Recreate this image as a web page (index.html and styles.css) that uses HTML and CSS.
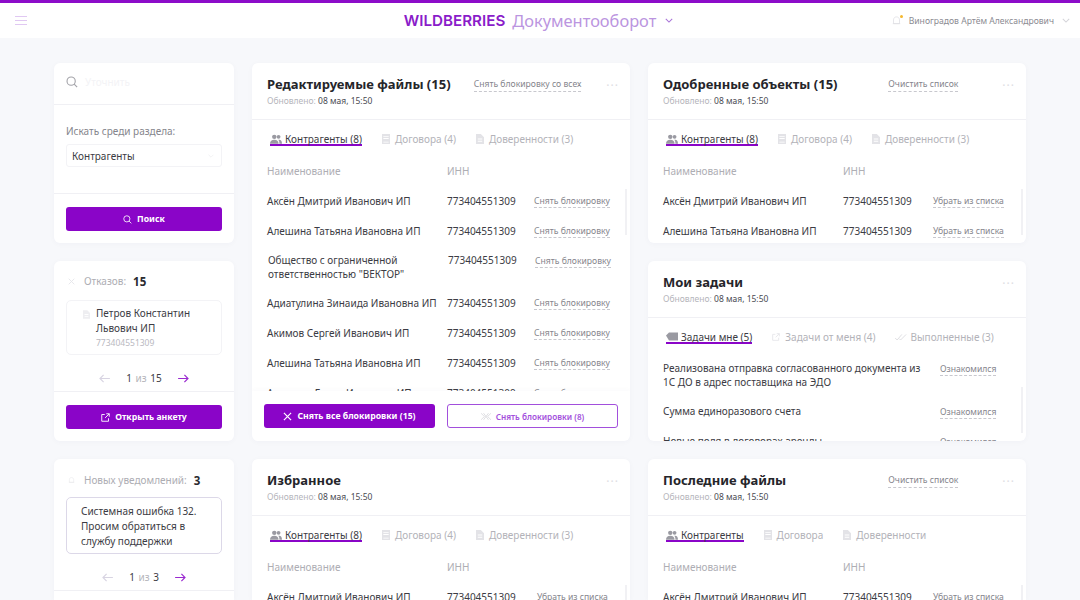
FILE: index.html
```html
<!DOCTYPE html>
<html lang="ru">

<head>
    <meta charset="UTF-8">
    <title>Wildberries Документооборот</title>
    <link rel="stylesheet" href="styles.css">
</head>

<body>
    <svg class="sprite" width="0" height="0">
        <symbol id="i-users" viewBox="0 0 14 11"><circle cx="5" cy="3" r="2.6"/><path d="M0 11c0-3 2-4.500 5-4.500s5 1.500 5 4.500z"/><circle cx="10" cy="3" r="2.200"/><path d="M10.800 6.300c2 .2 3.200 1.700 3.200 4.700h-3c0-2-.4-3.500-1.400-4.500z"/></symbol>
        <symbol id="i-book" viewBox="0 0 9 11"><path d="M0 0h9v11H0zM1.500 2v1h6V2zm0 2.500v1h6v-1zm0 5h6v-1h-6z" fill-rule="evenodd"/></symbol>
        <symbol id="i-file" viewBox="0 0 9 11"><path d="M0 0h5.500L9 3.500V11H0zM2 5v1h5V5zm0 2.500v1h5v-1z" fill-rule="evenodd"/></symbol>
        <symbol id="i-search" viewBox="0 0 14 14"><circle cx="6" cy="6" r="4.800" fill="none" stroke="currentColor" stroke-width="1.300"/><path d="M9.500 9.500 13 13" fill="none" stroke="currentColor" stroke-width="1.300"/></symbol>
        <symbol id="i-open" viewBox="0 0 12 12"><path d="M5 2H1v9h9V7M7 1h4v4M11 1 5.500 6.500" fill="none" stroke="currentColor" stroke-width="1.200"/></symbol>
        <symbol id="i-left" viewBox="0 0 12 10"><path d="M12 5H1M5 1 1 5l4 4" fill="none" stroke="currentColor" stroke-width="1.300"/></symbol>
        <symbol id="i-right" viewBox="0 0 12 10"><path d="M0 5h11M7 1l4 4-4 4" fill="none" stroke="currentColor" stroke-width="1.300"/></symbol>
        <symbol id="i-down" viewBox="0 0 10 6"><path d="M1 1l4 4 4-4" fill="none" stroke="currentColor" stroke-width="1.300"/></symbol>
        <symbol id="i-x" viewBox="0 0 10 10"><path d="M1 1l8 8M9 1 1 9" fill="none" stroke="currentColor" stroke-width="1.300"/></symbol>
        <symbol id="i-xx" viewBox="0 0 12 8"><path d="M0 0l4 4-4 4M3 0l3 4-3 4M12 0 8 4l4 4M9 0 6 4l3 4" fill="none" stroke="currentColor" stroke-width=".9"/></symbol>
        <symbol id="i-task" viewBox="0 0 12 9"><path d="M0 3l3-3h9v8H3z"/></symbol>
        <symbol id="i-check" viewBox="0 0 14 8"><path d="M0 5l2.500 2.500L8 1M5 6l1.500 1.500L13 1" fill="none" stroke="currentColor" stroke-width="1"/></symbol>
        <symbol id="i-bell" viewBox="0 0 12 13"><path d="M2 10V5c0-2.200 1.600-4 4-4s4 1.800 4 4v5zM1 10h10" fill="none" stroke="currentColor" stroke-width="1"/></symbol>
    </svg>

    <div class="topbar">
        <div class="burger"><span></span><span></span><span></span></div>
        <div class="brand">
            <span class="brand-logo">WILDBERRIES</span>
            <span class="brand-name">Документооборот</span>
            <svg class="brand-arrow"><use href="#i-down"/></svg>
        </div>
        <div class="user">
            <span class="bell"><svg><use href="#i-bell"/></svg><i></i></span>
            <span class="user-name">Виноградов Артём Александрович</span>
            <svg class="user-arrow"><use href="#i-down"/></svg>
        </div>
    </div>

    <div class="dashboard">
        <!-- левая колонка -->
        <div class="card area-search">
            <div class="search-row">
                <svg class="search-icon"><use href="#i-search"/></svg>
                <span class="search-hint">Уточнить</span>
            </div>
            <div class="search-section">
                <label>Искать среди раздела:</label>
                <div class="select">Контрагенты<svg><use href="#i-down"/></svg></div>
            </div>
            <div class="side-foot">
                <button class="btn"><svg class="btn-icon"><use href="#i-search"/></svg>Поиск</button>
            </div>
        </div>

        <div class="card side-card area-reject">
            <div class="stat"><svg class="stat-icon"><use href="#i-x"/></svg><span>Отказов:</span><b>15</b></div>
            <div class="box">
                <svg class="box-icon"><use href="#i-file"/></svg>
                <div>
                    <div class="box-name">Петров Константин Львович ИП</div>
                    <div class="box-inn">773404551309</div>
                </div>
            </div>
            <div class="pager">
                <svg class="arrow-off"><use href="#i-left"/></svg>
                <span class="pager-text">1 <em>из</em> 15</span>
                <svg class="arrow-on"><use href="#i-right"/></svg>
            </div>
            <div class="side-foot">
                <button class="btn"><svg class="btn-icon"><use href="#i-open"/></svg>Открыть анкету</button>
            </div>
        </div>

        <div class="card side-card area-notice card-cut">
            <div class="stat stat-notice"><svg class="stat-icon"><use href="#i-bell"/></svg><span>Новых уведомлений:</span><b>3</b></div>
            <div class="box box-notice">Системная ошибка 132. Просим обратиться в службу поддержки</div>
            <div class="pager">
                <svg class="arrow-off"><use href="#i-left"/></svg>
                <span class="pager-text">1 <em>из</em> 3</span>
                <svg class="arrow-on"><use href="#i-right"/></svg>
            </div>
        </div>

        <!-- редактируемые файлы -->
        <div class="card panel area-edited">
            <div class="panel-head">
                <div>
                    <h2>Редактируемые файлы (15)</h2>
                    <p>Обновлено: <span>08 мая, 15:50</span></p>
                </div>
                <a class="head-link head-link-wide">Снять блокировку со всех</a>
                <div class="dots">···</div>
            </div>
            <div class="tabs">
                <a class="tab active"><svg class="ic-users"><use href="#i-users"/></svg>Контрагенты (8)</a>
                <a class="tab"><svg class="ic-doc"><use href="#i-book"/></svg>Договора (4)</a>
                <a class="tab"><svg class="ic-doc"><use href="#i-file"/></svg>Доверенности (3)</a>
            </div>
            <div class="list">
                <div class="row row-head"><span>Наименование</span><span>ИНН</span></div>
                <div class="row"><span>Аксён Дмитрий Иванович ИП</span><span>773404551309</span><a>Снять блокировку</a></div>
                <div class="row"><span>Алешина Татьяна Ивановна ИП</span><span>773404551309</span><a>Снять блокировку</a></div>
                <div class="row row-double"><span>Общество с ограниченной ответственностью "ВЕКТОР"</span><span>773404551309</span><a>Снять блокировку</a></div>
                <div class="row"><span>Адиатулина Зинаида Ивановна ИП</span><span>773404551309</span><a>Снять блокировку</a></div>
                <div class="row"><span>Акимов Сергей Иванович ИП</span><span>773404551309</span><a>Снять блокировку</a></div>
                <div class="row"><span>Алешина Татьяна Ивановна ИП</span><span>773404551309</span><a>Снять блокировку</a></div>
                <div class="row"><span>Аксенова Елена Ивановна ИП</span><span>773404551309</span><a>Снять блокировку</a></div>
                <div class="scroll"></div>
            </div>
            <div class="panel-foot">
                <button class="btn"><svg class="btn-icon"><use href="#i-x"/></svg>Снять все блокировки (15)</button>
                <button class="btn btn-outline"><svg class="btn-icon"><use href="#i-xx"/></svg>Снять блокировки (8)</button>
            </div>
        </div>

        <!-- одобренные объекты -->
        <div class="card panel area-approved">
            <div class="panel-head">
                <div>
                    <h2>Одобренные объекты (15)</h2>
                    <p>Обновлено: <span>08 мая, 15:50</span></p>
                </div>
                <a class="head-link">Очистить список</a>
                <div class="dots">···</div>
            </div>
            <div class="tabs">
                <a class="tab active"><svg class="ic-users"><use href="#i-users"/></svg>Контрагенты (8)</a>
                <a class="tab"><svg class="ic-doc"><use href="#i-book"/></svg>Договора (4)</a>
                <a class="tab"><svg class="ic-doc"><use href="#i-file"/></svg>Доверенности (3)</a>
            </div>
            <div class="list list-remove">
                <div class="row row-head"><span>Наименование</span><span>ИНН</span></div>
                <div class="row"><span>Аксён Дмитрий Иванович ИП</span><span>773404551309</span><a>Убрать из списка</a></div>
                <div class="row"><span>Алешина Татьяна Ивановна ИП</span><span>773404551309</span><a>Убрать из списка</a></div>
                <div class="scroll"></div>
            </div>
        </div>

        <!-- мои задачи -->
        <div class="card panel area-tasks">
            <div class="panel-head">
                <div>
                    <h2>Мои задачи</h2>
                    <p>Обновлено: <span>08 мая, 15:50</span></p>
                </div>
                <div class="dots">···</div>
            </div>
            <div class="tabs">
                <a class="tab active"><svg class="ic-users"><use href="#i-task"/></svg>Задачи мне (5)</a>
                <a class="tab"><svg class="ic-doc"><use href="#i-open"/></svg>Задачи от меня (4)</a>
                <a class="tab"><svg class="ic-users"><use href="#i-check"/></svg>Выполненные (3)</a>
            </div>
            <div class="list list-tasks">
                <div class="task"><span>Реализована отправка согласованного документа из 1С ДО в адрес поставщика на ЭДО</span><a>Ознакомился</a></div>
                <div class="task"><span>Сумма единоразового счета</span><a>Ознакомился</a></div>
                <div class="task"><span>Новые поля в договорах аренды</span><a>Ознакомился</a></div>
                <div class="scroll"></div>
            </div>
        </div>

        <!-- избранное -->
        <div class="card panel area-fav card-cut">
            <div class="panel-head">
                <div>
                    <h2>Избранное</h2>
                    <p>Обновлено: <span>08 мая, 15:50</span></p>
                </div>
                <div class="dots">···</div>
            </div>
            <div class="tabs">
                <a class="tab active"><svg class="ic-users"><use href="#i-users"/></svg>Контрагенты (8)</a>
                <a class="tab"><svg class="ic-doc"><use href="#i-book"/></svg>Договора (4)</a>
                <a class="tab"><svg class="ic-doc"><use href="#i-file"/></svg>Доверенности (3)</a>
            </div>
            <div class="list list-remove">
                <div class="row row-head"><span>Наименование</span><span>ИНН</span></div>
                <div class="row"><span>Аксён Дмитрий Иванович ИП</span><span>773404551309</span><a>Убрать из списка</a></div>
                <div class="scroll"></div>
            </div>
        </div>

        <!-- последние файлы -->
        <div class="card panel area-recent card-cut">
            <div class="panel-head">
                <div>
                    <h2>Последние файлы</h2>
                    <p>Обновлено: <span>08 мая, 15:50</span></p>
                </div>
                <a class="head-link">Очистить список</a>
                <div class="dots">···</div>
            </div>
            <div class="tabs">
                <a class="tab active"><svg class="ic-users"><use href="#i-users"/></svg>Контрагенты</a>
                <a class="tab"><svg class="ic-doc"><use href="#i-book"/></svg>Договора</a>
                <a class="tab"><svg class="ic-doc"><use href="#i-file"/></svg>Доверенности</a>
            </div>
            <div class="list list-remove">
                <div class="row row-head"><span>Наименование</span><span>ИНН</span></div>
                <div class="row"><span>Аксён Дмитрий Иванович ИП</span><span>773404551309</span><a>Убрать из списка</a></div>
                <div class="scroll"></div>
            </div>
        </div>
    </div>
</body>

</html>
```

FILE: styles.css
```css
:root {
    --purple: #8a05c8;
    --page: #f7f8fb;
    --line: #f0f0f4;
    --text: #3c3c44;
    --muted: #a9a9b0;
}

* {
    margin: 0;
    padding: 0;
    box-sizing: border-box;
}

html,
body {
    height: 600px;
    overflow: hidden;
}

body {
    font-family: "Noto Sans", "Open Sans", sans-serif;
    font-size: 10px;
    background-color: var(--page);
    color: var(--text);
}

svg {
    fill: currentColor;
    flex: none;
}

.sprite {
    position: absolute;
}

/* шапка */
.topbar {
    height: 38px;
    border-top: 3px solid #8c0cc9;
    background: #fff;
    display: grid;
    grid-template-columns: 1fr auto 1fr;
    align-items: center;
    padding: 0 10px 0 15px;
}

.burger {
    width: 12px;
    display: flex;
    flex-direction: column;
    gap: 3px;
}

.burger span {
    height: 1px;
    background: #e0c8f2;
}

.brand {
    display: flex;
    align-items: center;
    margin-right: 8px;
}

.brand-logo {
    font-family: Inter, sans-serif;
    font-size: 15.2px;
    font-weight: 600;
    color: #8a1cc9;
}

.brand-name {
    font-size: 16.4px;
    margin-left: 7px;
    color: #bb95e0;
}

.brand-arrow {
    width: 8px;
    height: 5px;
    margin-left: 9px;
    color: #a873d8;
}

.user {
    display: flex;
    align-items: center;
    justify-content: flex-end;
}

.bell {
    position: relative;
    width: 9px;
    height: 10px;
    color: #dedee3;
}

.bell svg {
    width: 9px;
    height: 10px;
    display: block;
}

.bell i {
    position: absolute;
    top: -1px;
    right: -2px;
    width: 3px;
    height: 3px;
    border-radius: 50%;
    background: #f5b82e;
}

.user-name {
    margin-left: 8px;
    font-size: 8.6px;
    color: #8b8b92;
}

.user-arrow {
    width: 8px;
    height: 5px;
    margin-left: 8px;
    color: #d4d4d9;
}

/* сетка */
.dashboard {
    display: grid;
    grid-template-columns: 180px 378px 378px;
    grid-template-rows: 180px 180px 141px;
    grid-template-areas:
        "search edited approved"
        "reject edited tasks"
        "notice fav recent";
    gap: 18px;
    padding: 25px 0 0 54px;
}

.area-search { grid-area: search; }
.area-reject { grid-area: reject; }
.area-notice { grid-area: notice; }
.area-edited { grid-area: edited; }
.area-approved { grid-area: approved; }
.area-tasks { grid-area: tasks; }
.area-fav { grid-area: fav; }
.area-recent { grid-area: recent; }

.card {
    background: #fff;
    border-radius: 6px;
    box-shadow: 0 1px 6px rgba(40, 40, 90, 0.03);
    overflow: hidden;
}

.card-cut {
    border-radius: 6px 6px 0 0;
}

.side-card {
    padding-top: 12px;
}

.panel {
    display: flex;
    flex-direction: column;
}

/* поиск */
.search-row {
    height: 42px;
    padding: 0 0 4px 12px;
    border-bottom: 1px solid var(--line);
    display: flex;
    align-items: center;
}

.search-icon {
    width: 12px;
    height: 12px;
    color: #a3a3a9;
}

.search-hint {
    margin-left: 7px;
    color: #f3f3f6;
}

.search-section {
    height: 89px;
    padding: 19px 12px 0;
    border-bottom: 1px solid var(--line);
}

.search-section label {
    display: block;
    color: #85858c;
    margin-bottom: 6px;
}

.select {
    height: 23px;
    padding: 0 7px 0 5px;
    border: 1px solid #f3f3f6;
    border-radius: 3px;
    display: flex;
    align-items: center;
    justify-content: space-between;
}

.select svg {
    width: 6px;
    height: 4px;
    color: #eeeef1;
}

.side-foot {
    padding: 13px 12px;
}

.btn {
    width: 100%;
    height: 24px;
    border: none;
    border-radius: 3px;
    background: var(--purple);
    color: #fff;
    font-family: inherit;
    font-size: 8.7px;
    font-weight: 700;
    display: flex;
    align-items: center;
    justify-content: center;
}

.btn-icon {
    width: 9px;
    height: 9px;
    margin-right: 5px;
}

.btn-outline {
    background: #fff;
    color: #a24fdc;
    border: 1px solid #a24fdc;
    font-size: 8.2px;
    font-weight: 600;
}

.btn-outline .btn-icon {
    width: 10px;
    color: #d4d4d9;
}

/* отказы, уведомления */
.stat {
    display: flex;
    align-items: center;
    padding-left: 14px;
    height: 16px;
    color: #adadb3;
}

.stat-icon {
    width: 7px;
    height: 7px;
    margin-right: 9px;
    color: #e6e6ea;
}

.stat b {
    margin-left: 7px;
    font-size: 11.5px;
    color: #2b2b30;
}

.box {
    margin: 11px 12px 0;
    height: 55px;
    padding: 5px 6px 0 16px;
    border: 1px solid #f3f3f6;
    border-radius: 5px;
    display: flex;
    line-height: 15px;
}

.box-icon {
    width: 7px;
    height: 9px;
    margin: 4px 6px 0 0;
    color: #eeeef1;
}

.box-inn {
    font-size: 8.5px;
    line-height: 13px;
    color: #b9b9bf;
}

.stat-notice {
    padding-top: 2px;
}

.box-notice {
    display: block;
    margin-top: 10px;
    height: 57px;
    padding: 6px 14px;
    border-color: #dcd8e8;
}

.pager {
    height: 37px;
    padding-top: 10px;
    border-bottom: 1px solid var(--line);
    display: flex;
    align-items: center;
    justify-content: center;
    gap: 16px;
}

.pager svg {
    width: 11px;
    height: 9px;
}

.arrow-off {
    color: #d8d4e2;
}

.arrow-on {
    color: #9a2ad0;
}

.pager-text em {
    font-style: normal;
    color: #b5b5bb;
    margin: 0 1px;
}

/* панели */
.panel-head {
    height: 57px;
    flex: none;
    padding: 11px 11px 0 15px;
    border-bottom: 1px solid var(--line);
    display: flex;
    align-items: flex-start;
}

.panel-head h2 {
    font-size: 13px;
    line-height: 20px;
    font-weight: 700;
    color: #25252a;
}

.panel-head p {
    font-size: 8.5px;
    line-height: 13px;
    color: #b5b5bb;
}

.panel-head p span {
    color: #4a4a52;
}

.head-link {
    margin: 4px 44px 0 auto;
    font-size: 8.6px;
    line-height: 13px;
    color: #85858c;
    border-bottom: 1px dashed #c8c8ce;
}

.head-link-wide {
    margin-right: 25px;
}

.dots {
    margin: 5px 0 0 auto;
    font-size: 12px;
    line-height: 14px;
    letter-spacing: 1px;
    color: #dedee3;
}

.head-link + .dots {
    margin-left: 0;
}

.tabs {
    flex: none;
    height: 41px;
    padding: 13px 18px 0;
    display: flex;
    gap: 20px;
}

.tab {
    height: 15px;
    line-height: 13px;
    color: #b3b3b9;
    display: flex;
    align-items: flex-start;
}

.tab.active {
    color: #3c3c44;
    height: 13px;
    border-bottom: 2px solid var(--purple);
}

.ic-users {
    width: 12px;
    height: 10px;
    margin: 1px 3px 0 0;
    color: #d9d9de;
}

.tab.active .ic-users {
    color: #9a9aa2;
}

.ic-doc {
    width: 8px;
    height: 10px;
    margin: 1px 5px 0 0;
    color: #e3e3e7;
}

.list {
    position: relative;
    flex: 1;
    min-height: 0;
    overflow: hidden;
    padding-left: 15px;
}

.row {
    display: grid;
    grid-template-columns: 180px 87px auto;
    align-items: center;
    height: 30px;
    white-space: nowrap;
}

.row-head {
    height: 25px;
    padding-top: 3px;
    line-height: 14px;
    color: #aeaeb4;
    align-items: start;
}

.row-double {
    height: 42px;
    padding: 7px 0 0 1px;
    align-items: start;
    line-height: 14px;
}

.row-double span:first-child {
    white-space: normal;
    padding-right: 8px;
}

.row-double a {
    margin-top: 2px;
}

.row a,
.task a {
    justify-self: start;
    font-size: 8.6px;
    line-height: 12px;
    color: #85858c;
    border-bottom: 1px dashed #c8c8ce;
}

.list-remove .row {
    grid-template-columns: 180px 90px auto;
}

.scroll {
    position: absolute;
    right: 3px;
    top: 28px;
    width: 2px;
    height: 46px;
    background: #f1f1f4;
}

.list-tasks {
    padding-top: 2px;
}

.task {
    display: grid;
    grid-template-columns: 277px auto;
    align-items: start;
    line-height: 14px;
    padding-bottom: 15px;
}

.task span {
    padding-right: 15px;
}

.task a {
    margin-top: 2px;
}

.panel-foot {
    height: 50px;
    flex: none;
    padding: 13px 12px;
    display: grid;
    grid-template-columns: 1fr 1fr;
    gap: 12px;
    box-shadow: 0 -2px 4px rgba(40, 40, 90, 0.02);
}
```
